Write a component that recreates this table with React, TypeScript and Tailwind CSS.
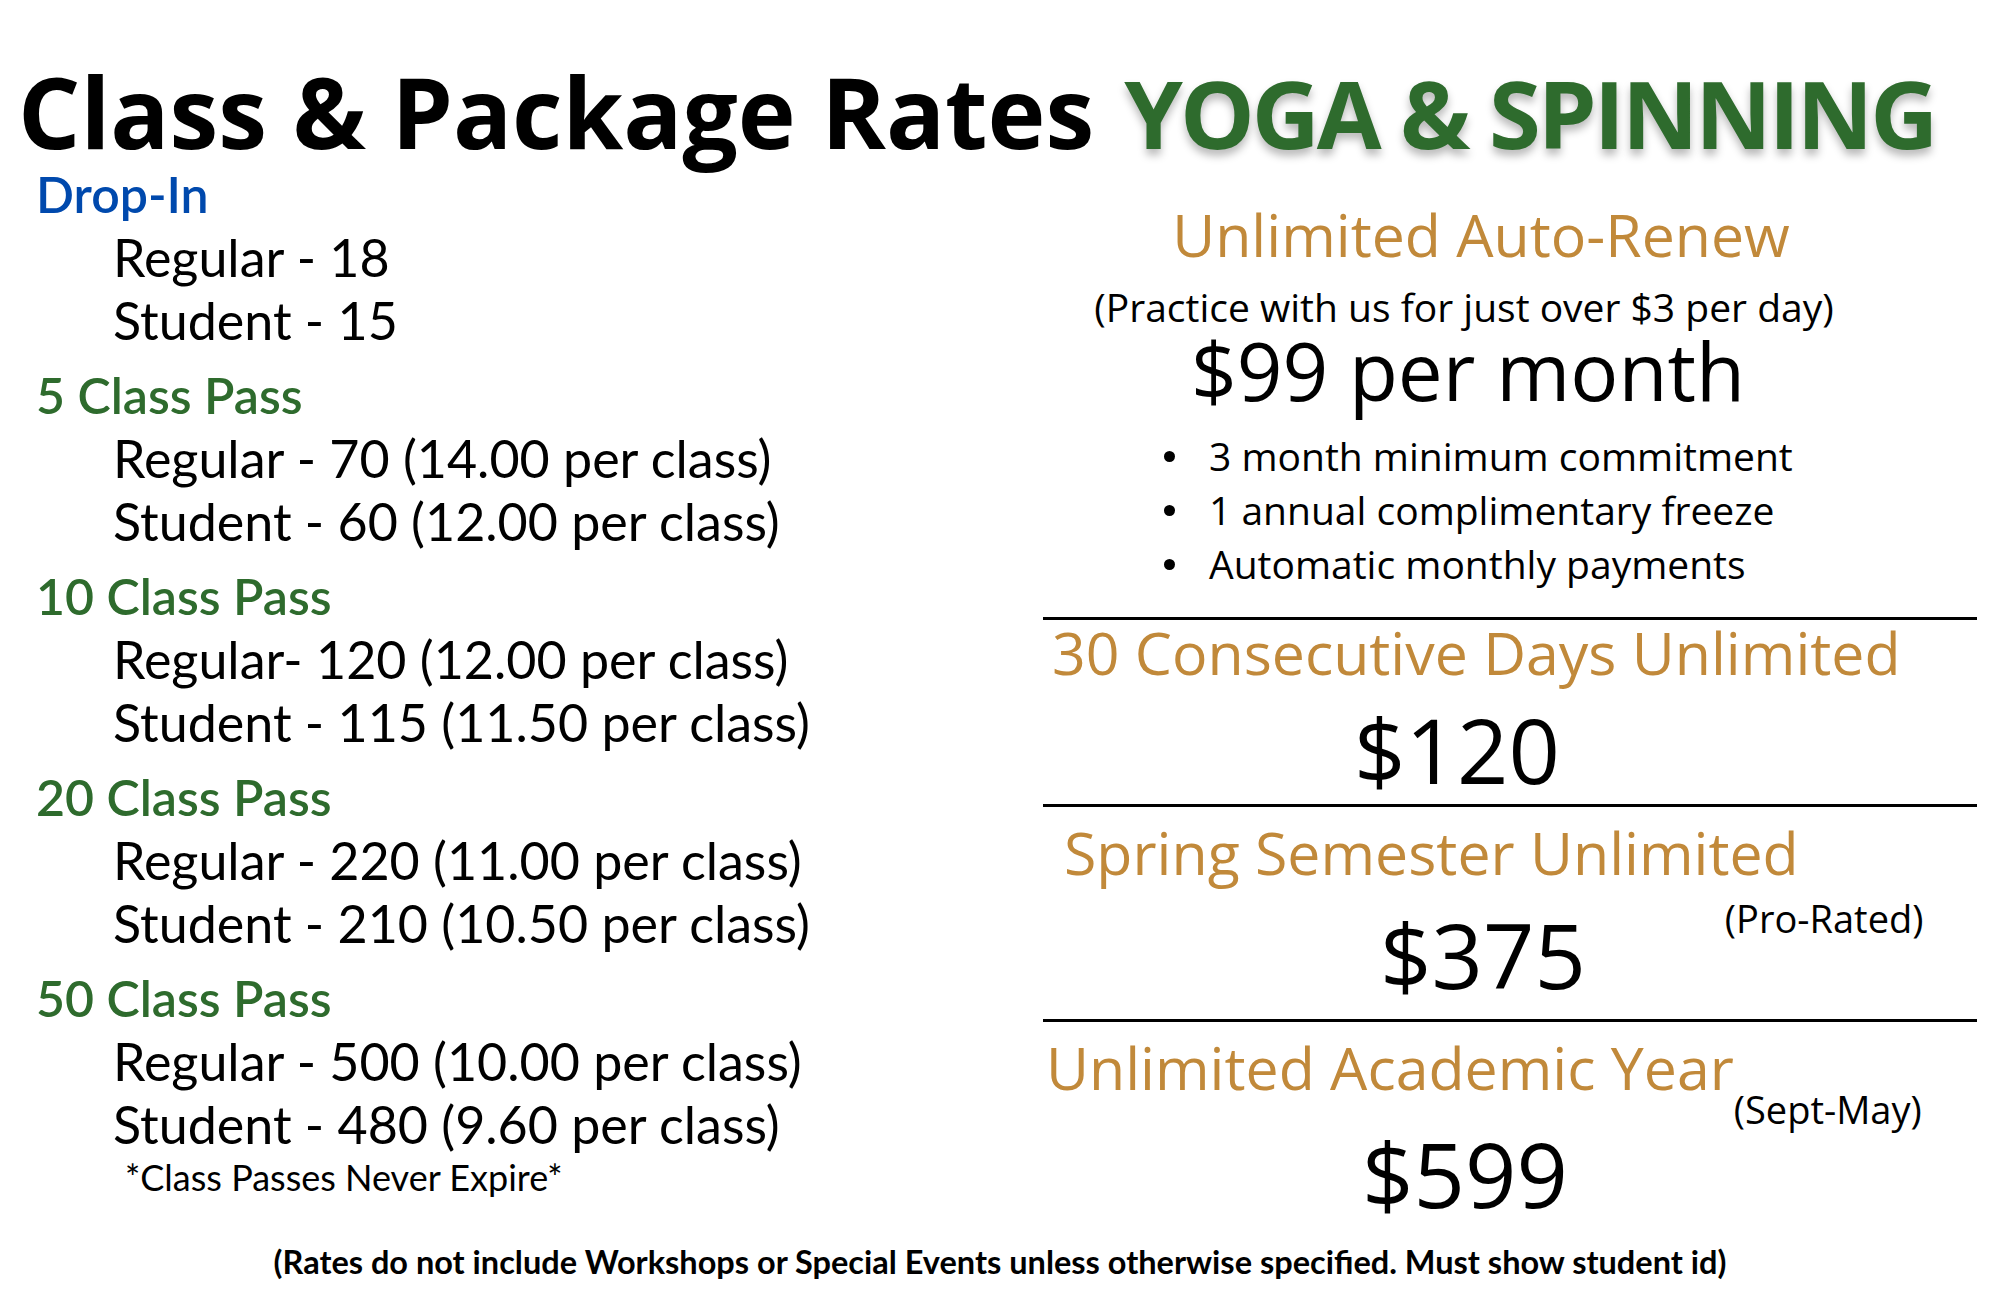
import React from "react";

type Group = { title: string; color: string; rows: string[] };

const groups: Group[] = [
  { title: "Drop-In", color: "text-[#0049ad]", rows: ["Regular - 18", "Student - 15"] },
  { title: "5 Class Pass", color: "text-[#2e6b2d]", rows: ["Regular - 70 (14.00 per class)", "Student - 60 (12.00 per class)"] },
  { title: "10 Class Pass", color: "text-[#2e6b2d]", rows: ["Regular- 120 (12.00 per class)", "Student - 115 (11.50 per class)"] },
  { title: "20 Class Pass", color: "text-[#2e6b2d]", rows: ["Regular - 220 (11.00 per class)", "Student - 210 (10.50 per class)"] },
  { title: "50 Class Pass", color: "text-[#2e6b2d]", rows: ["Regular - 500 (10.00 per class)", "Student - 480 (9.60 per class)"] },
];

const perks = ["3 month minimum commitment", "1 annual complimentary freeze", "Automatic monthly payments"];

function PassList() {
  return (
    <section className="w-[1043px] shrink-0 pl-[36px] font-['Lato','Noto_Sans',sans-serif]">
      {groups.map((g, i) => (
        <div key={g.title} className={i > 0 ? "mt-[12px]" : ""}>
          <h2 className={`text-[50px] leading-[63px] font-semibold ${g.color}`}>{g.title}</h2>
          {g.rows.map((r) => (
            <p key={r} className="pl-[77px] text-[52px] leading-[63px] text-black">
              {r}
            </p>
          ))}
        </div>
      ))}
      <p className="pl-[89px] text-[36px] leading-[42px] text-black">*Class Passes Never Expire*</p>
    </section>
  );
}

function Divider() {
  return <div className="h-[3px] w-full bg-black" />;
}

function Unlimited() {
  return (
    <section className="w-[934px] shrink-0 font-['Open_Sans',sans-serif]">
      <div className="w-[876px] text-center">
        <h3 className="mt-[31px] text-[59px] leading-[80px] text-[#c1893a]">Unlimited Auto-Renew</h3>
        <p className="mt-[8px] pr-[34px] text-[39px] leading-[50px] text-black">
          (Practice with us for just over $3 per day)
        </p>
        <p className="pr-[26px] text-[80px] leading-[76px] text-black">$99 per month</p>
      </div>
      <ul className="mt-[21px] pl-[121px]">
        {perks.map((p) => (
          <li key={p} className="flex items-center text-[39px] leading-[54px] text-black">
            <span className="mr-[34px] h-[11px] w-[11px] rounded-full bg-black" />
            {p}
          </li>
        ))}
      </ul>
      <div className="mt-[26px]">
        <Divider />
      </div>
      <h3 className="pl-[9px] text-[59px] leading-[64px] text-[#c1893a]">30 Consecutive Days Unlimited</h3>
      <p className="mt-[15px] w-[828px] text-center text-[90px] leading-[100px] text-black">$120</p>
      <div className="mt-[5px]">
        <Divider />
      </div>
      <h3 className="mt-[13px] pl-[21px] text-[59px] leading-[64px] text-[#c1893a]">Spring Semester Unlimited</h3>
      <div className="mt-[12px] flex items-start">
        <p className="mt-[8px] pl-[337px] text-[90px] leading-[100px] text-black">$375</p>
        <span className="ml-[139px] text-[38px] leading-[44px] text-black">(Pro-Rated)</span>
      </div>
      <div className="mt-[15px]">
        <Divider />
      </div>
      <div className="mt-[13px] flex items-start pl-[3px]">
        <h3 className="text-[59px] leading-[64px] text-[#c1893a]">Unlimited Academic Year</h3>
        <span className="mt-[52px] text-[38px] leading-[44px] text-black">(Sept-May)</span>
      </div>
      <p className="-mt-[8px] w-[844px] text-center text-[90px] leading-[100px] text-black">$599</p>
    </section>
  );
}

export default function App() {
  return (
    <div className="h-[1294px] w-[2000px] overflow-hidden bg-white">
      <header className="flex items-baseline whitespace-nowrap pl-[18px] pt-[61px] font-['Open_Sans',sans-serif] font-bold">
        <h1 className="text-[98px] leading-[100px] text-black">Class &amp; Package Rates</h1>
        <span className="ml-[30px] text-[94px] leading-[100px] tracking-[-3px] text-[#2e6b2d] [text-shadow:0_6px_8px_rgba(0,0,0,0.28)]">
          YOGA &amp; SPINNING
        </span>
      </header>
      <main className="flex h-[1079px]">
        <PassList />
        <Unlimited />
      </main>
      <footer className="text-center font-['Lato','Noto_Sans',sans-serif] text-[32.5px] font-bold leading-[40px] text-black">
        (Rates do not include Workshops or Special Events unless otherwise specified. Must show student id)
      </footer>
    </div>
  );
}
